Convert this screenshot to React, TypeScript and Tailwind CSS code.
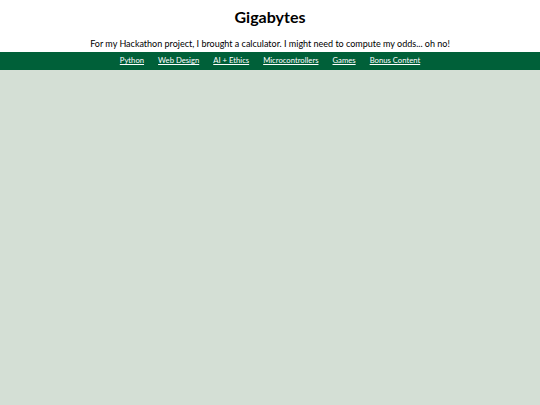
import React from 'react';

const links = ['Python', 'Web Design', 'AI + Ethics', 'Microcontrollers', 'Games', 'Bonus Content'];

export default function App() {
    return (
        <div className="min-h-[405px] flex flex-col bg-white font-['Lato',sans-serif] text-black">
            <header className="text-center pt-[7px]">
                <h1 className="text-[16px] font-bold leading-[20px]">Gigabytes</h1>
                <p className="text-[9px] leading-[14px] mt-[10px] mb-[1px]">
                    For my Hackathon project, I brought a calculator. I might need to compute my odds... oh no!
                </p>
            </header>
            <nav className="bg-[#006039] h-[18px] flex items-center justify-center gap-[14px]">
                {links.map((l) => (
                    <a key={l} href="#" className="text-white text-[7.7px] underline">
                        {l}
                    </a>
                ))}
            </nav>
            <main className="flex-1 bg-[#d4dfd5]" />
        </div>
    );
}
